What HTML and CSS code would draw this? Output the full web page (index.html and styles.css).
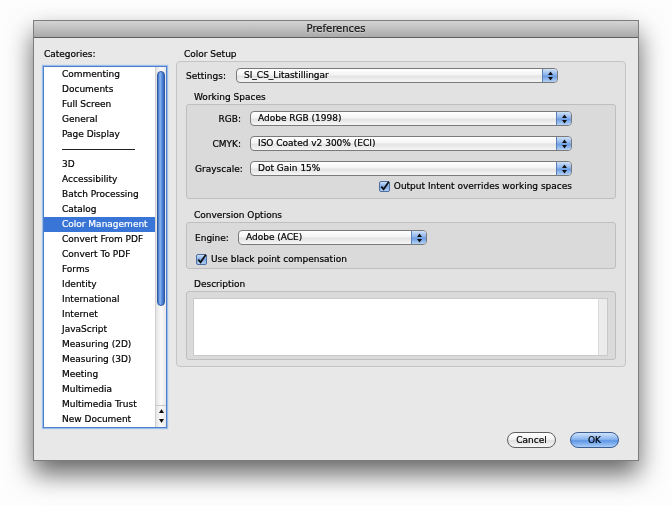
FILE: index.html
```html
<!DOCTYPE html>
<html lang="en">
<head>
  <meta charset="UTF-8">
  <title>Preferences</title>
  <link rel="stylesheet" href="styles.css">
</head>
<body>
  <div class="desk">
  <div class="window">
    <div class="titlebar">Preferences</div>
    <div class="content">

      <div class="sidebar">
        <div class="caption">Categories:</div>
        <div class="list">
          <ul class="items">
            <li>Commenting</li>
            <li>Documents</li>
            <li>Full Screen</li>
            <li>General</li>
            <li>Page Display</li>
            <li class="sep"><span></span></li>
            <li>3D</li>
            <li>Accessibility</li>
            <li>Batch Processing</li>
            <li>Catalog</li>
            <li class="selected">Color Management</li>
            <li>Convert From PDF</li>
            <li>Convert To PDF</li>
            <li>Forms</li>
            <li>Identity</li>
            <li>International</li>
            <li>Internet</li>
            <li>JavaScript</li>
            <li>Measuring (2D)</li>
            <li>Measuring (3D)</li>
            <li>Meeting</li>
            <li>Multimedia</li>
            <li>Multimedia Trust</li>
            <li>New Document</li>
          </ul>
          <div class="scrollbar">
            <div class="track"><div class="thumb"></div></div>
            <div class="arrows">
              <svg width="11" height="10" viewBox="0 0 11 10"><path d="M5.5 3 L8 7 L3 7 Z" fill="#111"/></svg>
              <svg width="11" height="10" viewBox="0 0 11 10"><path d="M3 3 L8 3 L5.5 7 Z" fill="#111"/></svg>
            </div>
          </div>
        </div>
      </div>

      <div class="main">
        <div class="caption heading">Color Setup</div>
        <div class="group">
          <div class="settings">
            <span class="label">Settings:</span>
            <div class="popup settings-popup">
              <span class="value">SI_CS_Litastillingar</span>
              <span class="stepper"><svg width="7" height="10" viewBox="0 0 7 10"><path d="M3.5 0.5 L6 4 L1 4 Z M1 6 L6 6 L3.5 9.5 Z" fill="#111"/></svg></span>
            </div>
          </div>

          <div class="caption sub">Working Spaces</div>
          <div class="box spaces">
            <div class="field">
              <span class="label">RGB:</span>
              <div class="popup space-popup">
                <span class="value">Adobe RGB (1998)</span>
                <span class="stepper"><svg width="7" height="10" viewBox="0 0 7 10"><path d="M3.5 0.5 L6 4 L1 4 Z M1 6 L6 6 L3.5 9.5 Z" fill="#111"/></svg></span>
              </div>
            </div>
            <div class="field">
              <span class="label">CMYK:</span>
              <div class="popup space-popup">
                <span class="value">ISO Coated v2 300% (ECI)</span>
                <span class="stepper"><svg width="7" height="10" viewBox="0 0 7 10"><path d="M3.5 0.5 L6 4 L1 4 Z M1 6 L6 6 L3.5 9.5 Z" fill="#111"/></svg></span>
              </div>
            </div>
            <div class="field">
              <span class="label">Grayscale:</span>
              <div class="popup space-popup">
                <span class="value">Dot Gain 15%</span>
                <span class="stepper"><svg width="7" height="10" viewBox="0 0 7 10"><path d="M3.5 0.5 L6 4 L1 4 Z M1 6 L6 6 L3.5 9.5 Z" fill="#111"/></svg></span>
              </div>
            </div>
            <div class="check intent">
              <svg class="tick" width="11" height="11" viewBox="0 0 11 11">
                <defs>
                  <linearGradient id="cb1" x1="0" y1="0" x2="0" y2="1">
                    <stop offset="0" stop-color="#d6e6fa"/>
                    <stop offset="0.5" stop-color="#7eaae8"/>
                    <stop offset="1" stop-color="#b7d3f6"/>
                  </linearGradient>
                </defs>
                <rect x="0.5" y="0.5" width="10" height="10" rx="1.5" fill="url(#cb1)" stroke="#4d6e9e"/>
                <path d="M2.3 5.6 L4.6 8.3 L9.8 0.8" fill="none" stroke="#111" stroke-width="1.8"/>
              </svg>
              <span>Output Intent overrides working spaces</span>
            </div>
          </div>

          <div class="caption sub conv-caption">Conversion Options</div>
          <div class="box conversion">
            <div class="field">
              <span class="label engine-label">Engine:</span>
              <div class="popup engine-popup">
                <span class="value">Adobe (ACE)</span>
                <span class="stepper"><svg width="7" height="10" viewBox="0 0 7 10"><path d="M3.5 0.5 L6 4 L1 4 Z M1 6 L6 6 L3.5 9.5 Z" fill="#111"/></svg></span>
              </div>
            </div>
            <div class="check">
              <svg class="tick" width="11" height="11" viewBox="0 0 11 11">
                <defs>
                  <linearGradient id="cb2" x1="0" y1="0" x2="0" y2="1">
                    <stop offset="0" stop-color="#d6e6fa"/>
                    <stop offset="0.5" stop-color="#7eaae8"/>
                    <stop offset="1" stop-color="#b7d3f6"/>
                  </linearGradient>
                </defs>
                <rect x="0.5" y="0.5" width="10" height="10" rx="1.5" fill="url(#cb2)" stroke="#4d6e9e"/>
                <path d="M2.3 5.6 L4.6 8.3 L9.8 0.8" fill="none" stroke="#111" stroke-width="1.8"/>
              </svg>
              <span>Use black point compensation</span>
            </div>
          </div>

          <div class="caption sub desc-caption">Description</div>
          <div class="box description">
            <div class="desc-field"><div class="desc-scroll"></div></div>
          </div>
        </div>

        <div class="actions">
          <button class="btn">Cancel</button>
          <button class="btn default">OK</button>
        </div>
      </div>

    </div>
  </div>
  </div>
</body>
</html>
```

FILE: styles.css
```css
* {
  box-sizing: border-box;
}
body {
  margin: 0;
  background: #fff;
  font-family: "DejaVu Sans", sans-serif;
  font-size: 9px;
  color: #000;
  -webkit-text-stroke: 0.2px #000;
}
.desk {
  height: 506px;
  padding: 20px 0 0 33px;
  background: #fdfdfd;
}
.window {
  width: 606px;
  height: 441px;
  border: 1px solid #7d7d7d;
  background: #e8e8e8;
  display: flex;
  flex-direction: column;
  filter: drop-shadow(0 13px 13px rgba(0, 0, 0, 0.6));
}
.titlebar {
  height: 17px;
  line-height: 16px;
  text-align: center;
  font-size: 10px;
  color: #1a1a1a;
  background: linear-gradient(#d4d4d4, #a9a9a9);
  border-bottom: 1px solid #5f5f5f;
  text-shadow: 0 1px 0 rgba(255, 255, 255, 0.35);
}
.content {
  flex: 1;
  display: flex;
  gap: 9px;
  padding: 9px 12px 12px 9px;
}
.caption {
  height: 14px;
  line-height: 15px;
  padding-left: 1px;
}
.caption.heading {
  padding-left: 8px;
}

/* category list */
.sidebar {
  width: 125px;
}
.sidebar .caption {
  margin-bottom: 5px;
}
.list {
  height: 362px;
  display: flex;
  background: #fff;
  border: 1px solid #4f7fcc;
  box-shadow: 0 0 1px 1px #9dbdeb;
}
.items {
  flex: 1;
  margin: 0;
  padding: 0;
  list-style: none;
}
.items li {
  height: 15px;
  line-height: 15px;
  padding-left: 18px;
  white-space: nowrap;
}
.items li.selected {
  background: #3875d7;
  color: #fff;
  -webkit-text-stroke: 0.2px #fff;
}
.items li.sep {
  display: flex;
  align-items: center;
}
.items li.sep span {
  width: 73px;
  height: 1px;
  background: #222;
}
.scrollbar {
  width: 11px;
  display: flex;
  flex-direction: column;
  border-left: 1px solid #d0d0d0;
  background: linear-gradient(to right, #e4e4e4, #fafafa 50%, #e8e8e8);
}
.track {
  flex: 1;
  padding: 4px 1px 0 1px;
}
.thumb {
  height: 235px;
  border-radius: 5px;
  background: linear-gradient(to right, #3c6fc4, #8fb8ef 35%, #5c90df 60%, #2f62b8);
  border: 1px solid #2c5aa5;
}
.arrows {
  height: 22px;
  display: flex;
  flex-direction: column;
  border-top: 1px solid #c8c8c8;
}
.arrows svg {
  display: block;
}

/* main panel */
.main {
  flex: 1;
  display: flex;
  flex-direction: column;
}
.group {
  background: #e2e2e2;
  border: 1px solid #c4c4c4;
  border-radius: 4px;
  padding: 6px 9px 6px 9px;
}
.caption.sub {
  margin-top: 7px;
  padding-left: 8px;
}
.caption.conv-caption {
  margin-top: 9px;
}
.caption.desc-caption {
  margin-top: 8px;
}
.box {
  background: #dadada;
  border: 1px solid #bfbfbf;
  border-radius: 3px;
}
.settings,
.field {
  display: flex;
  align-items: center;
}
.settings .label {
  width: 50px;
}
.popup {
  height: 15px;
  display: flex;
  border: 1px solid #7a7a7a;
  border-radius: 4px;
  background: linear-gradient(#ffffff, #f4f4f4 45%, #e3e3e3 55%, #f6f6f6);
  overflow: hidden;
}
.popup .value {
  flex: 1;
  line-height: 13px;
  padding-left: 7px;
  white-space: nowrap;
}
.stepper {
  width: 15px;
  display: flex;
  align-items: center;
  justify-content: center;
  border-left: 1px solid #5a7fb5;
  background: linear-gradient(#cfe1f8, #8cb4ec 45%, #6a9be3 55%, #b5d2f6);
}
.settings-popup {
  width: 322px;
}
.spaces {
  padding: 6px 43px 6px 8px;
}
.spaces .field + .field {
  margin-top: 10px;
}
.spaces .label {
  width: 46px;
  margin-right: 9px;
  text-align: right;
}
.space-popup {
  width: 322px;
}
.check {
  display: flex;
  align-items: center;
  gap: 4px;
  height: 12px;
}
.check .tick {
  flex: none;
}
.intent {
  justify-content: flex-end;
  margin-top: 4px;
}
.conversion {
  padding: 7px 8px 3px 8px;
}
.engine-label {
  width: 43px;
}
.engine-popup {
  width: 189px;
}
.conversion .check {
  margin-top: 8px;
  padding-left: 1px;
}
.description {
  padding: 6px 7px 3px 6px;
}
.desc-field {
  height: 58px;
  background: #fff;
  border: 1px solid #c9c9c9;
  display: flex;
  justify-content: flex-end;
}
.desc-scroll {
  width: 9px;
  background: #ececec;
  border-left: 1px solid #dcdcdc;
}

/* buttons */
.actions {
  margin-top: auto;
  display: flex;
  justify-content: flex-end;
  gap: 14px;
  padding-right: 7px;
}
.btn {
  width: 49px;
  height: 16px;
  padding: 0;
  font-family: "DejaVu Sans", sans-serif;
  font-size: 9px;
  color: #000;
  border: 1px solid #5e5e5e;
  border-radius: 8px;
  background: linear-gradient(#ffffff, #f2f2f2 45%, #e0e0e0 55%, #f7f7f7);
}
.btn.default {
  border-color: #3d5f94;
  background: linear-gradient(#cfe2fb, #8ab5ef 45%, #5f96e4 55%, #a8cdf8);
}
```
